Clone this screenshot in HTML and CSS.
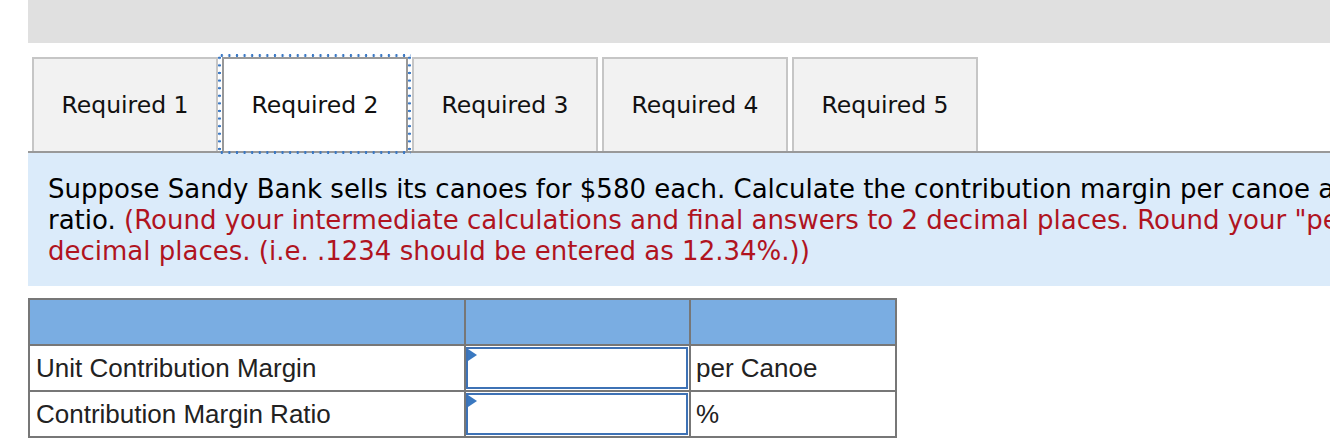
FILE: index.html
```html
<!DOCTYPE html>
<html lang="en">
<head>
<meta charset="utf-8">
<title>Required 2</title>
<link rel="stylesheet" href="styles.css">
</head>
<body>
<div class="page">
  <div class="topbar"></div>
  <div class="tabs">
    <button class="tab">Required 1</button>
    <button class="tab active">Required 2</button>
    <button class="tab">Required 3</button>
    <button class="tab">Required 4</button>
    <button class="tab">Required 5</button>
  </div>
  <div class="question">
    <p class="qtext">Suppose Sandy Bank sells its canoes for $580 each. Calculate the contribution margin per canoe and contribution margin<br>ratio. <span class="hint">(Round your intermediate calculations and final answers to 2 decimal places. Round your "percentage" answer to 2<br>decimal places. (i.e. .1234 should be entered as 12.34%.))</span></p>
  </div>
  <table class="answer">
    <colgroup>
      <col class="c1">
      <col class="c2">
      <col class="c3">
    </colgroup>
    <thead>
      <tr class="head"><th></th><th></th><th></th></tr>
    </thead>
    <tbody>
      <tr>
        <td class="label">Unit Contribution Margin</td>
        <td class="inputcell"><span class="field"><span class="flag"></span></span></td>
        <td class="unit">per Canoe</td>
      </tr>
      <tr>
        <td class="label">Contribution Margin Ratio</td>
        <td class="inputcell"><span class="field"><span class="flag"></span></span></td>
        <td class="unit">%</td>
      </tr>
    </tbody>
  </table>
</div>
</body>
</html>
```

FILE: styles.css
```css
html, body {
  margin: 0;
  padding: 0;
  background: #ffffff;
  overflow: hidden;
}

.page {
  margin-left: 28px;
  width: 1500px;
}

.topbar {
  height: 43px;
  background: #e0e0e0;
}

.tabs {
  display: flex;
  gap: 4px;
  margin-top: 14px;
  padding-left: 4px;
  border-bottom: 2px solid #999999;
}

.tab {
  box-sizing: border-box;
  width: 186px;
  height: 94px;
  margin: 0;
  padding: 0;
  border: 2px solid #c6c6c6;
  border-bottom: none;
  background: #f2f2f2;
  color: #111111;
  font-family: "DejaVu Sans", Verdana, sans-serif;
  font-size: 23.5px;
  text-align: center;
  cursor: pointer;
  position: relative;
}

.tab.active {
  background: #ffffff;
  border-color: #999999;
  z-index: 1;
}

.tab.active::after {
  content: "";
  position: absolute;
  left: -6.3px;
  right: -5.3px;
  top: -5.3px;
  bottom: -3.3px;
  pointer-events: none;
  background:
    radial-gradient(circle at 50% 50%, #3a78c4 0, #3a78c4 1.1px, transparent 1.5px) 0 0 / 7.6px 3px repeat-x,
    radial-gradient(circle at 50% 50%, #3a78c4 0, #3a78c4 1.1px, transparent 1.5px) 0 100% / 7.6px 3px repeat-x,
    radial-gradient(circle at 50% 50%, #3a78c4 0, #3a78c4 1.1px, transparent 1.5px) 0 0 / 3px 7.6px repeat-y,
    radial-gradient(circle at 50% 50%, #3a78c4 0, #3a78c4 1.1px, transparent 1.5px) 100% 0 / 3px 7.6px repeat-y;
}

.question {
  background: #dbebfa;
  padding: 21px 20px 19px 20px;
}

.qtext {
  margin: 0;
  font-family: "DejaVu Sans", Verdana, sans-serif;
  font-size: 26px;
  line-height: 31px;
  color: #000000;
  white-space: nowrap;
}

.hint {
  color: #b0141f;
}

.answer {
  margin-top: 12px;
  border-collapse: collapse;
  table-layout: fixed;
  width: 869px;
  font-family: "Liberation Sans", Arial, sans-serif;
  font-size: 26px;
  color: #222222;
}

.answer col.c1 { width: 436px; }
.answer col.c2 { width: 225px; }
.answer col.c3 { width: 206px; }

.answer th,
.answer td {
  border: 2px solid #777777;
  padding: 0;
  height: 44px;
}

.answer .head th {
  background: #7aade2;
}

.answer td.label,
.answer td.unit {
  padding-left: 6px;
  text-align: left;
  vertical-align: middle;
}

.answer td.unit {
  padding-left: 5px;
}

.answer td.inputcell {
  vertical-align: top;
}

.field {
  display: block;
  position: relative;
  box-sizing: border-box;
  height: 42px;
  margin: 1px 1px 1px 0;
  border: 2px solid #3e72b5;
  background: #ffffff;
}

.flag {
  position: absolute;
  left: 0;
  top: 0;
  width: 0;
  height: 0;
  border-top: 6px solid transparent;
  border-bottom: 6px solid transparent;
  border-left: 9px solid #3a78c0;
}
```
